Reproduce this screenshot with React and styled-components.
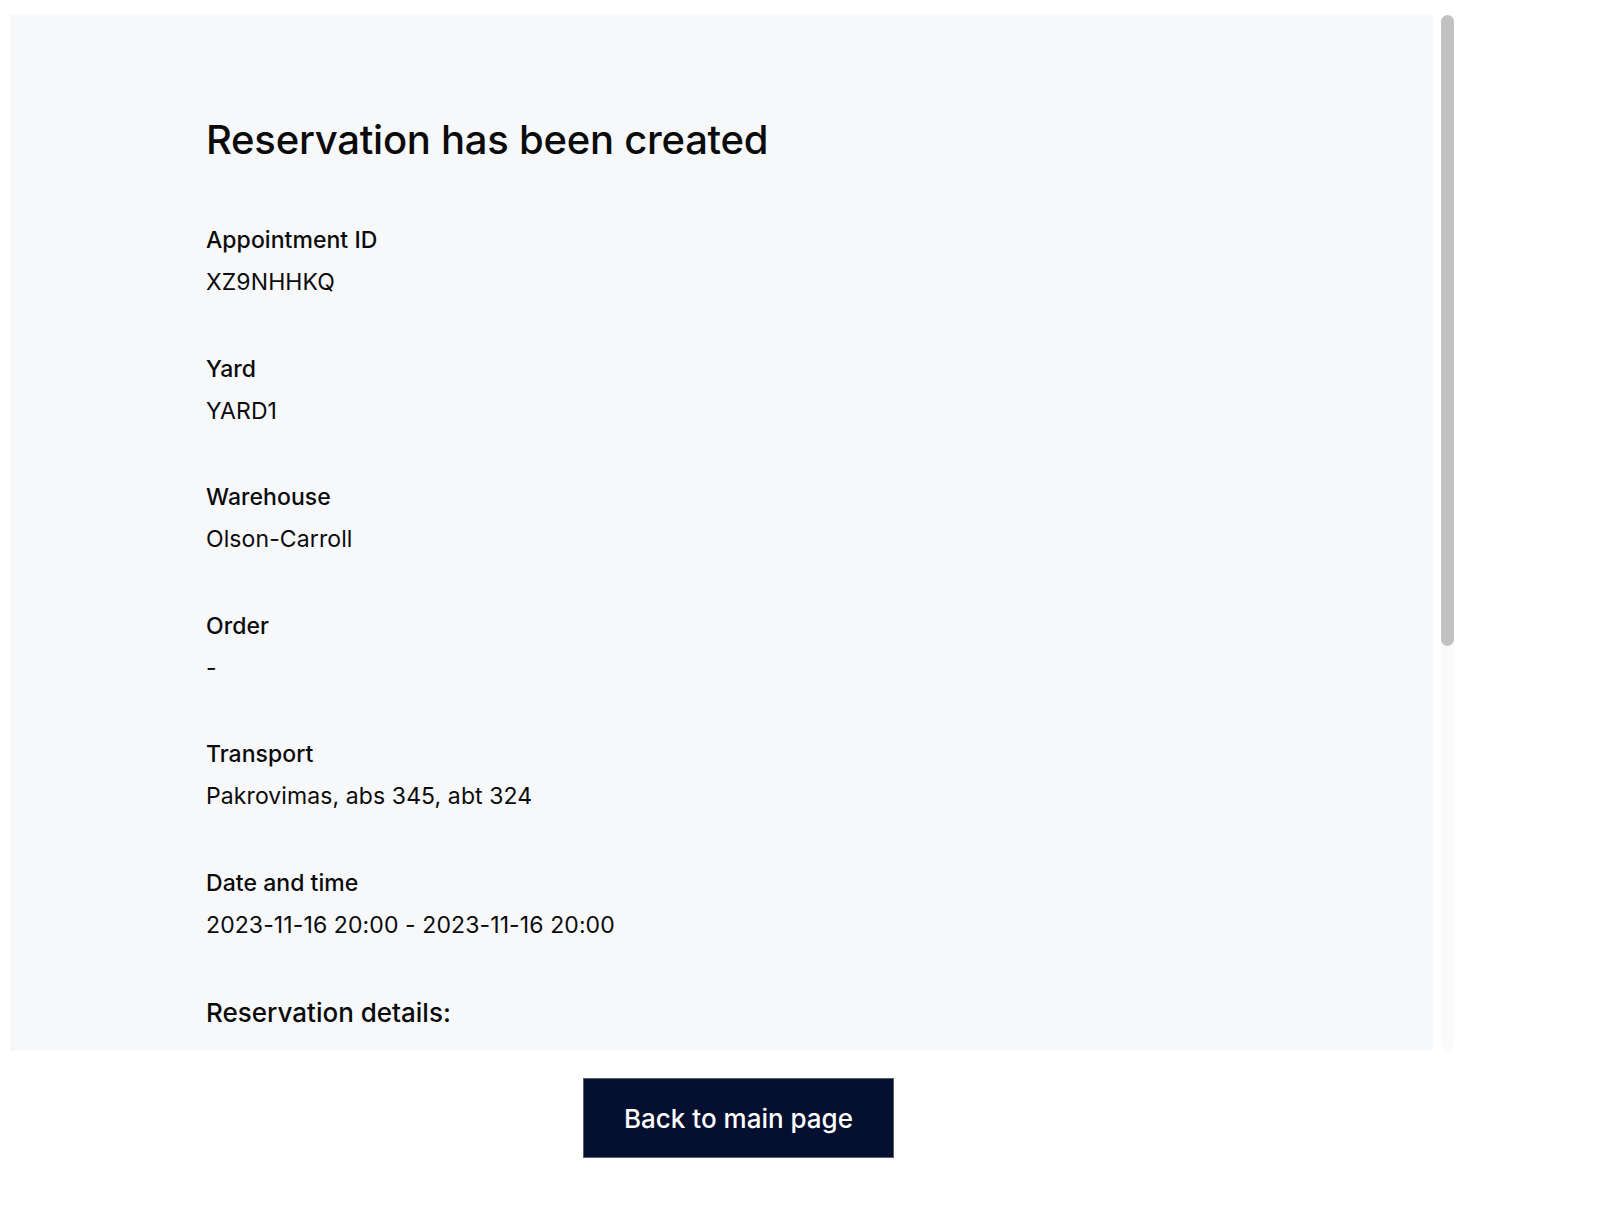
import React from "react";
import styled, { createGlobalStyle } from "styled-components";

const GlobalStyle = createGlobalStyle`
  html, body {
    margin: 0;
    padding: 0;
    background: #ffffff;
  }
  body {
    font-family: Inter, "Noto Sans", "Liberation Sans", sans-serif;
    color: #0b0b0c;
  }
  * { box-sizing: border-box; }
`;

const Page = styled.div`
  width: 1457px;
  margin-left: 10px;
  padding-top: 15px;
  display: flex;
  flex-direction: column;
  align-items: flex-start;
`;

const ScrollFrame = styled.div`
  display: flex;
  gap: 8px;
  height: 1036px;
`;

const Panel = styled.div`
  width: 1423px;
  height: 100%;
  overflow: hidden;
  background: #f7f8fa;
  padding: 101px 0 60px 196px;
  display: flex;
  flex-direction: column;
`;

const ScrollTrack = styled.div`
  width: 13px;
  height: 100%;
  background: #fafafa;
  border-radius: 7px;
  display: flex;
  flex-direction: column;
`;

const ScrollThumb = styled.div`
  width: 100%;
  height: 631px;
  background: #c1c1c1;
  border-radius: 7px;
`;

const Title = styled.h1`
  margin: 0 0 61px;
  font-size: 40px;
  line-height: 48px;
  font-weight: 500;
  letter-spacing: -0.25px;
`;

const Field = styled.div`
  display: flex;
  flex-direction: column;
  gap: 12px;
  margin-bottom: 56.5px;
`;

const Label = styled.div`
  font-size: 23px;
  line-height: 30px;
  font-weight: 500;
  letter-spacing: 0.05px;
`;

const Value = styled.div`
  font-size: 23px;
  line-height: 30px;
  font-weight: 400;
  letter-spacing: 0.1px;
`;

const SectionTitle = styled.h2`
  margin: 0;
  font-size: 26px;
  line-height: 34px;
  font-weight: 500;
`;

const Footer = styled.div`
  width: 100%;
  display: flex;
  justify-content: center;
  padding-top: 27px;
`;

const BackButton = styled.button`
  height: 80px;
  padding: 0 40px;
  background: #050f30;
  color: #ffffff;
  border: 1px solid #5a6070;
  font-family: Inter, "Noto Sans", "Liberation Sans", sans-serif;
  font-size: 26px;
  font-weight: 500;
  cursor: pointer;
`;

const fields = [
  ["Appointment ID", "XZ9NHHKQ"],
  ["Yard", "YARD1"],
  ["Warehouse", "Olson-Carroll"],
  ["Order", "-"],
  ["Transport", "Pakrovimas, abs 345, abt 324"],
  ["Date and time", "2023-11-16 20:00 - 2023-11-16 20:00"],
];

export default function App() {
  return (
    <>
      <GlobalStyle />
      <Page>
        <ScrollFrame>
          <Panel>
            <Title>Reservation has been created</Title>
            {fields.map(([label, value]) => (
              <Field key={label}>
                <Label>{label}</Label>
                <Value>{value}</Value>
              </Field>
            ))}
            <SectionTitle>Reservation details:</SectionTitle>
          </Panel>
          <ScrollTrack>
            <ScrollThumb />
          </ScrollTrack>
        </ScrollFrame>
        <Footer>
          <BackButton type="button">Back to main page</BackButton>
        </Footer>
      </Page>
    </>
  );
}
